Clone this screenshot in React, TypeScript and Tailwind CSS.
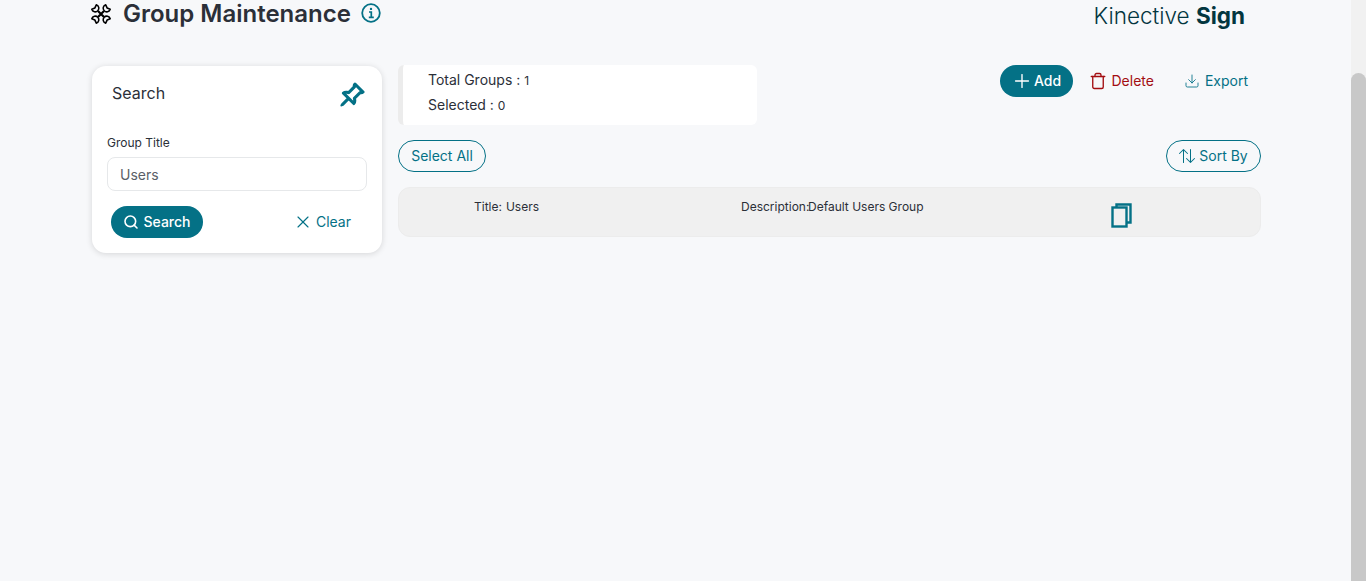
import { BsArrowDownUp, BsPinAngle } from "react-icons/bs";
import { Download, Plus, Search, Trash, X } from "lucide-react";

function ToolsIcon() {
  const head = "M6.3 1.8 4.9 4.9 1.8 6.3A3.6 3.6 0 1 0 6.3 1.8Z";
  return (
    <svg width="22" height="22" viewBox="0 0 22 22" fill="none" stroke="#000" strokeWidth="1.6" strokeLinejoin="round" className="shrink-0">
      <path d={head} />
      <path d={head} transform="rotate(90 11 11)" />
      <path d={head} transform="rotate(180 11 11)" />
      <path d={head} transform="rotate(270 11 11)" />
      <path d="M8 8l6 6M14 8l-6 6" strokeWidth="2.2" />
    </svg>
  );
}

function InfoIcon() {
  return (
    <svg width="20" height="20" viewBox="0 0 20 20" fill="none" stroke="#047186" className="ml-[10px] -mt-[3px] shrink-0">
      <circle cx="10" cy="10" r="8.8" strokeWidth="1.8" />
      <path d="M8 9h2.3v5.2M7.8 14.4h5" strokeWidth="1.7" />
      <circle cx="10" cy="5.9" r="1.2" fill="#047186" stroke="none" />
    </svg>
  );
}

function CopyIcon() {
  return (
    <svg width="21" height="25" viewBox="0 0 21 25" fill="none" stroke="#047186" strokeWidth="2.4" className="ml-px shrink-0">
      <path d="M5.5 4V1.5h14v18H16" />
      <rect x="1.5" y="4.5" width="14" height="19" />
    </svg>
  );
}

export default function App() {
  return (
    <div className="flex h-[581px] overflow-hidden bg-[#f7f8fa] font-['Inter',sans-serif] text-[#2b2f38]">
      <div className="flex-1 pl-[90px] pr-[90px]">
        <div className="flex h-[66px] items-start justify-between pt-px">
          <div className="flex items-center">
            <ToolsIcon />
            <h1 className="ml-[11px] text-[24px] leading-[26px] font-semibold">Group Maintenance</h1>
            <InfoIcon />
          </div>
          <div className="mr-[16px] mt-[2px] text-[22.5px] leading-[26px] font-light text-[#03363f]">
            Kinective <span className="font-bold">Sign</span>
          </div>
        </div>
        <div className="flex items-start gap-[16px]">
          <div className="ml-[2px] h-[187px] w-[290px] shrink-0 rounded-[14px] bg-white px-[15px] pt-[16px] shadow-[0_1px_6px_rgba(0,0,0,0.14)]">
            <div className="flex items-start justify-between pl-[5px] pr-[2px]">
              <span className="text-[16px] leading-[22px] font-normal">Search</span>
              <BsPinAngle className="text-[26px] text-[#047186] [stroke:#047186] [stroke-width:0.9]" />
            </div>
            <label className="mt-[27px] block text-[12px] leading-[16px]">Group Title</label>
            <div className="mt-[6px] flex h-[34px] items-center rounded-[8px] border border-[#e6e8ea] bg-white pl-[12px] text-[14px] text-[#5a5f68]">
              Users
            </div>
            <div className="mt-[15px] flex items-center justify-between pl-[4px] pr-[16px]">
              <button className="flex h-[32px] w-[92px] items-center justify-center gap-[4px] rounded-full bg-[#047186] pb-px text-[14px] font-medium text-white">
                <Search size={16} strokeWidth={2.4} />
                Search
              </button>
              <button className="flex items-center gap-[3px] pb-px text-[14px] text-[#047186]">
                <X size={20} strokeWidth={1.4} />
                Clear
              </button>
            </div>
          </div>
          <div className="flex-1">
            <div className="flex items-start justify-between">
              <div className="-mt-[1px] h-[60px] w-[359px] rounded-[6px] border-l-[5px] border-[#ececec] bg-white pl-[25px] pt-[2px] text-[14px] leading-[25px]">
                <div>
                  Total Groups : <span className="text-[12px]">1</span>
                </div>
                <div className="-mt-px">
                  Selected : <span className="text-[12px]">0</span>
                </div>
              </div>
              <div className="mr-[13px] -mt-[1px] flex items-center">
                <button className="flex h-[32px] w-[73px] items-center justify-center gap-[1px] rounded-full bg-[#047186] pr-[2px] pb-px text-[14px] font-medium text-white">
                  <Plus size={22} strokeWidth={1.5} />
                  Add
                </button>
                <button className="ml-[16px] flex items-center gap-[4px] pb-px text-[14px] text-[#a30d11]">
                  <Trash size={18} strokeWidth={1.8} />
                  Delete
                </button>
                <button className="ml-[30px] flex items-center gap-[5px] pb-px text-[14px] text-[#047186]">
                  <Download size={16} strokeWidth={1.3} />
                  Export
                </button>
              </div>
            </div>
            <div className="mt-[15px] flex items-center justify-between">
              <button className="h-[32px] w-[88px] rounded-full border border-[#047186] pb-px text-[14px] text-[#047186]">
                Select All
              </button>
              <button className="flex h-[32px] w-[95px] items-center justify-center gap-[4px] rounded-full border border-[#047186] pb-px text-[14px] text-[#047186]">
                <BsArrowDownUp className="-scale-x-100 text-[16px]" />
                Sort By
              </button>
            </div>
            <div className="mt-[15px] flex h-[50px] rounded-[12px] border border-[#ececec] bg-[#f0f0f0] pt-[11px] text-[12px] leading-[16px]">
              <div className="ml-[75px] flex w-[267px] shrink-0 gap-[4px]">
                <span>Title:</span>
                <span>Users</span>
              </div>
              <div className="flex w-[369px] shrink-0">
                <span className="w-[67px] shrink-0 whitespace-nowrap">Description:</span>
                <span>Default Users Group</span>
              </div>
              <div className="mt-[4px]">
                <CopyIcon />
              </div>
            </div>
          </div>
        </div>
      </div>
      <div className="w-[15px] shrink-0 bg-[#f1f1f1] pt-[73px]">
        <div className="h-full rounded-t-full bg-[#c8c8c8]" />
      </div>
    </div>
  );
}
